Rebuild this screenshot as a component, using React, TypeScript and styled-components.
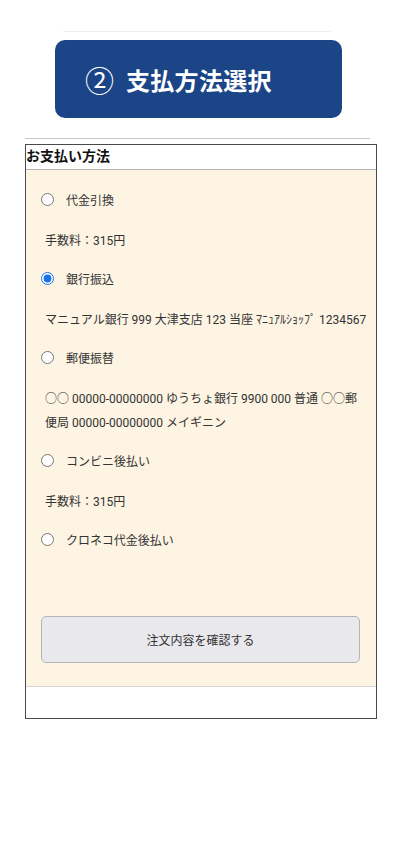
import React from 'react'
import styled, { createGlobalStyle } from 'styled-components'

const GlobalStyle = createGlobalStyle`
  body {
    margin: 0;
    background: #fff;
    font-family: Roboto, "Noto Sans CJK JP", sans-serif;
    color: #222;
  }
`

type Method = {
  id: string
  label: string
  info?: string
}

const methods: Method[] = [
  { id: 'cod', label: '代金引換', info: '手数料：315円' },
  { id: 'bank', label: '銀行振込', info: 'マニュアル銀行 999 大津支店 123 当座 ﾏﾆｭｱﾙｼｮｯﾌﾟ 1234567' },
  { id: 'post', label: '郵便振替', info: '○○ 00000-00000000 ゆうちょ銀行 9900 000 普通 ○○郵便局 00000-00000000 メイギニン' },
  { id: 'cvs', label: 'コンビニ後払い', info: '手数料：315円' },
  { id: 'kuroneko', label: 'クロネコ代金後払い' },
]

const App: React.FC = () => {
  const [selected, setSelected] = React.useState('bank')

  return (
    <Page>
      <GlobalStyle />
      <TopRule />
      <StepBanner>
        <StepNumber>②</StepNumber>
        <StepTitle>支払方法選択</StepTitle>
      </StepBanner>
      <Divider />
      <Panel>
        <PanelTitle>お支払い方法</PanelTitle>
        <PanelBody>
          {methods.map((m) => (
            <React.Fragment key={m.id}>
              <RadioRow>
                <Radio
                  type="radio"
                  name="payment"
                  checked={selected === m.id}
                  onChange={() => setSelected(m.id)}
                />
                <RadioLabel>{m.label}</RadioLabel>
              </RadioRow>
              {m.info && <Info>{m.info}</Info>}
            </React.Fragment>
          ))}
          <ConfirmButton type="button">注文内容を確認する</ConfirmButton>
        </PanelBody>
        <PanelFooter />
      </Panel>
    </Page>
  )
}

export default App

const Page = styled.div`
    width: 400px;
    min-height: 850px;
    padding-top: 31px;
    box-sizing: border-box;
`

const TopRule = styled.div`
    width: 268px;
    height: 1px;
    margin: 0 auto 8px 63px;
    background-color: #eceef3;
`

const StepBanner = styled.div`
    width: 287px;
    height: 78px;
    margin-left: 55px;
    box-sizing: border-box;
    padding-left: 30px;
    border-radius: 10px;
    background-color: #1c4587;
    display: flex;
    align-items: center;
    gap: 12px;
    color: #fff;
    font-family: "Noto Sans CJK JP", sans-serif;
`

const StepNumber = styled.span`
    font-size: 29px;
    font-weight: 400;
    line-height: 1;
`

const StepTitle = styled.span`
    font-size: 24px;
    font-weight: 700;
    letter-spacing: 0.3px;
`

const Divider = styled.div`
    width: 345px;
    height: 1px;
    margin: 20px 0 0 25px;
    background-color: #c8c8c8;
`

const Panel = styled.div`
    width: 352px;
    margin: 5px 0 0 25px;
    border: 1px solid #4a4a4a;
    box-sizing: border-box;
    display: flex;
    flex-direction: column;
`

const PanelTitle = styled.div`
    height: 24px;
    font-family: "Noto Sans CJK JP", sans-serif;
    font-size: 14px;
    font-weight: 700;
    line-height: 20px;
    color: #111;
    border-bottom: 1px solid #b4b4b4;
    background-color: #fff;
`

const PanelBody = styled.div`
    background-color: #fdf4e4;
    padding: 18px 2px 23px 15px;
    display: flex;
    flex-direction: column;
    border-bottom: 1px solid #d6d6d6;
`

const RadioRow = styled.label`
    height: 22px;
    margin-bottom: 19px;
    display: flex;
    align-items: center;
    gap: 12px;
`

const Radio = styled.input`
    width: 13px;
    height: 13px;
    margin: 0;
    accent-color: #1a73e8;
`

const RadioLabel = styled.span`
    font-size: 12px;
    color: #333;
`

const Info = styled.div`
    font-size: 12px;
    line-height: 24px;
    color: #333;
    margin-bottom: 14px;
    padding-left: 4px;
    padding-right: 5px;
`

const ConfirmButton = styled.button`
    margin-top: 47px;
    height: 47px;
    width: calc(100% - 14px);
    border: 1px solid #b5b5b5;
    border-radius: 5px;
    background-color: #e8e8ed;
    font-family: Roboto, "Noto Sans CJK JP", sans-serif;
    font-size: 12px;
    color: #333;
`

const PanelFooter = styled.div`
    height: 31px;
    background-color: #fff;
`
